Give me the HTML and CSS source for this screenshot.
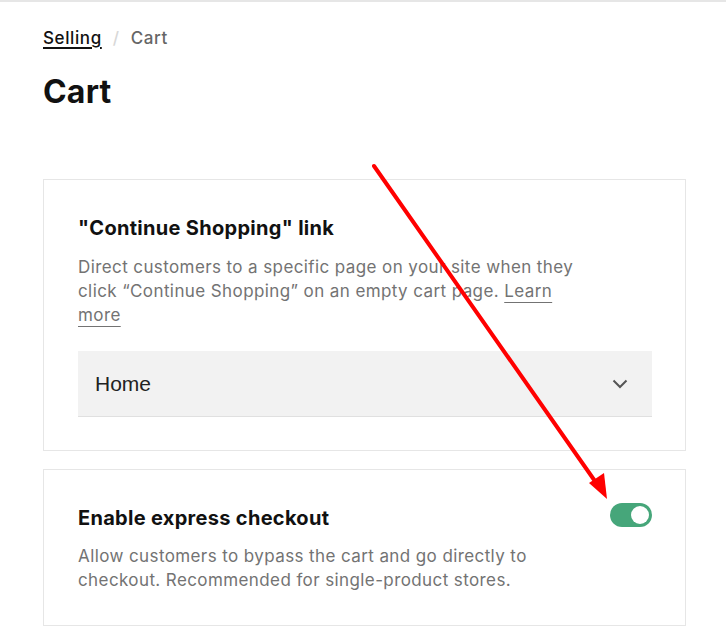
FILE: index.html
```html
<!DOCTYPE html>
<html lang="en">
<head>
<meta charset="utf-8">
<title>Cart</title>
<link rel="stylesheet" href="styles.css">
</head>
<body>
<div class="topline"></div>
<main class="page">
  <nav class="crumbs">
    <a class="crumb-link" href="#">Selling</a>
    <span class="crumb-sep">/</span>
    <span class="crumb-current">Cart</span>
  </nav>
  <h1 class="title">Cart</h1>

  <section class="card">
    <h2 class="card-title">"Continue Shopping" link</h2>
    <p class="card-desc">Direct customers to a specific page on your site when they click “Continue Shopping” on an empty cart page. <a class="desc-link" href="#">Learn more</a></p>
    <div class="select">
      <span class="select-value">Home</span>
      <svg class="chevron" width="16" height="10" viewBox="0 0 16 10"><path d="M1.5 1.5 L8 8 L14.5 1.5" fill="none" stroke="#555" stroke-width="2"/></svg>
    </div>
  </section>

  <section class="card card-2">
    <div class="card-head">
      <h2 class="card-title">Enable express checkout</h2>
      <span class="toggle"><span class="knob"></span></span>
    </div>
    <p class="card-desc">Allow customers to bypass the cart and go directly to checkout. Recommended for single-product stores.</p>
  </section>
</main>
<svg class="arrow" width="726" height="640" viewBox="0 0 726 640">
  <line x1="374" y1="166" x2="597" y2="484" stroke="#ff0000" stroke-width="4" stroke-linecap="round"/>
  <polygon points="607,499 589,483 604,473" fill="#ff0000"/>
</svg>
</body>
</html>
```

FILE: styles.css
```css
html, body {
  margin: 0;
  padding: 0;
  background: #ffffff;
}
body {
  font-family: Inter, "Noto Sans", sans-serif;
  color: #111;
  position: relative;
  width: 726px;
  height: 640px;
  overflow: hidden;
}
.topline {
  height: 2px;
  background: #e6e6e6;
}
.page {
  padding: 24px 40px 0 43px;
}
.crumbs {
  display: flex;
  align-items: center;
  gap: 11px;
  font-size: 17px;
  line-height: 24px;
  font-weight: 500;
  letter-spacing: 0.6px;
}
.crumb-link {
  color: #111;
  text-decoration: underline;
  text-underline-offset: 3px;
  text-decoration-thickness: 1.5px;
}
.crumb-sep {
  color: #d8d8d8;
}
.crumb-current {
  color: #666;
}
.title {
  margin: 24px 0 0 0;
  font-size: 32px;
  line-height: 36px;
  font-weight: 700;
  letter-spacing: 0.2px;
}
.card {
  margin-top: 69px;
  width: 643px;
  box-sizing: border-box;
  border: 1px solid #e6e6e6;
  padding: 34px 33px 33px 34px;
}
.card-2 {
  margin-top: 18px;
}
.card-title {
  margin: 0;
  font-size: 20px;
  line-height: 28px;
  font-weight: 700;
  letter-spacing: 0.3px;
}
.card-desc {
  margin: 13px 0 0 0;
  max-width: 500px;
  font-size: 17px;
  line-height: 24px;
  color: #737373;
  letter-spacing: 0.4px;
}
.desc-link {
  color: #737373;
  text-decoration: underline;
  text-underline-offset: 5px;
  text-decoration-thickness: 1px;
}
.select {
  margin-top: 24px;
  height: 65px;
  background: #f2f2f2;
  border-bottom: 1px solid #e0e0e0;
  display: flex;
  align-items: center;
  justify-content: space-between;
  padding: 0 24px 0 17px;
}
.select-value {
  font-family: "Liberation Sans", Arial, sans-serif;
  font-size: 21px;
  color: #222;
}
.chevron {
  display: block;
}
.card-head {
  display: flex;
  align-items: center;
  justify-content: space-between;
}
.card-2 .card-desc {
  margin-top: 12px;
}
.toggle {
  width: 42px;
  height: 24px;
  border-radius: 12px;
  background: #46a67a;
  display: flex;
  align-items: center;
  justify-content: flex-end;
  padding: 0 3px;
  box-sizing: border-box;
  margin-top: -6px;
}
.knob {
  width: 18px;
  height: 18px;
  border-radius: 50%;
  background: #ffffff;
}
.arrow {
  position: absolute;
  left: 0;
  top: 0;
  pointer-events: none;
}
```
